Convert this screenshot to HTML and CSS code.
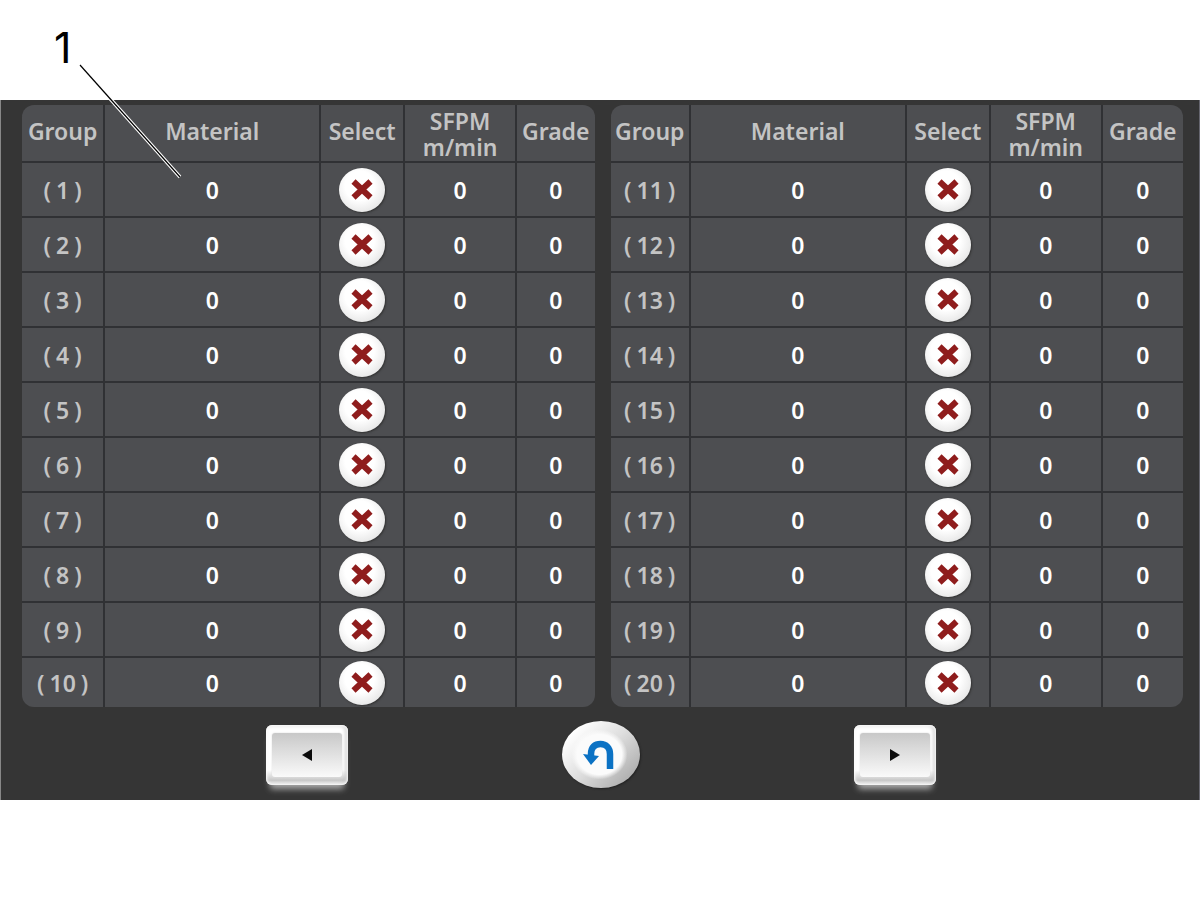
FILE: index.html
```html
<!DOCTYPE html>
<html lang="en">
<head>
    <meta charset="UTF-8">
    <meta name="viewport" content="width=device-width, initial-scale=1.0">
    <title>Material Groups</title>
    <link rel="stylesheet" href="styles.css">
</head>
<body>
    <div class="figure">
        <div class="callout">1</div>
        <svg class="leader" width="110" height="120" viewBox="0 0 110 120" aria-hidden="true">
            <path d="M4 6L104 118" stroke="#fff" stroke-width="3.4"/>
            <path d="M4 6L104 118" stroke="#000" stroke-width="1.2"/>
        </svg>

        <main class="screen">
            <div class="tables">
                <table>
                    <colgroup>
                        <col class="group"><col class="material"><col class="select"><col class="speed"><col class="grade">
                    </colgroup>
                    <thead>
                        <tr><th>Group</th><th>Material</th><th>Select</th><th class="two-line">SFPM<br>m/min</th><th>Grade</th></tr>
                    </thead>
                    <tbody id="left"></tbody>
                </table>
                <table>
                    <colgroup>
                        <col class="group"><col class="material"><col class="select"><col class="speed"><col class="grade">
                    </colgroup>
                    <thead>
                        <tr><th>Group</th><th>Material</th><th>Select</th><th class="two-line">SFPM<br>m/min</th><th>Grade</th></tr>
                    </thead>
                    <tbody id="right"></tbody>
                </table>
            </div>

            <div class="nav">
                <button class="key" aria-label="Previous page">
                    <span class="cap">
                        <svg width="12" height="12" viewBox="0 0 12 12"><path d="M1 6L11 0V12Z" fill="#0c0c0c"/></svg>
                    </span>
                </button>
                <button class="back" aria-label="Return">
                    <svg width="32" height="30" viewBox="0 0 32 30">
                        <path d="M8 16V14C8 7 12 4 17.500 4C23 4 27 8 27 14V29" fill="none" stroke="#0b72c4" stroke-width="6.500"/>
                        <path d="M0 14L16 16L8 25Z" fill="#0b72c4"/>
                    </svg>
                </button>
                <button class="key" aria-label="Next page">
                    <span class="cap">
                        <svg width="12" height="12" viewBox="0 0 12 12"><path d="M11 6L1 0V12Z" fill="#0c0c0c"/></svg>
                    </span>
                </button>
            </div>
        </main>
    </div>

    <script>
        // Fill one table with the rows first..last
        function fillRows(id, first, last) {
            let html = "";
            for (let n = first; n <= last; n++) {
                html += `<tr>
                    <td class="label">(<span class="num">${n}</span>)</td>
                    <td>0</td>
                    <td><button class="cross" aria-label="Select group ${n}">
                        <svg width="24" height="24" viewBox="0 0 24 24">
                            <path d="M3.5 3.5L20.5 19.5M20.5 3.5L3.5 19.5" stroke="#8f1d1d" stroke-width="6"/>
                        </svg>
                    </button></td>
                    <td>0</td>
                    <td>0</td>
                </tr>`;
            }
            document.getElementById(id).innerHTML = html;
        }

        fillRows("left", 1, 10);
        fillRows("right", 11, 20);
    </script>
</body>
</html>
```
FILE: styles.css
```css
* {
    box-sizing: border-box;
}
body {
    margin: 0;
    background: #fff;
    font-family: "Noto Sans", sans-serif;
}
.figure {
    position: relative;
}
.callout {
    height: 100px;
    padding: 22px 0 0 54px;
    font: 43px/50px Inter, sans-serif;
    color: #000;
}
.leader {
    position: absolute;
    left: 76px;
    top: 59px;
    pointer-events: none;
}
.screen {
    background: #353535;
    border-left: 1px solid #888;
    border-right: 1px solid #66666f;
    padding: 5px 16px 12px 21px;
}
.tables {
    display: grid;
    grid-template-columns: 1fr 1fr;
    gap: 16px;
}
table {
    width: 100%;
    table-layout: fixed;
    border-collapse: separate;
    border-spacing: 0;
    background: #4d4e51;
    border-radius: 12px;
    overflow: hidden;
}
.group {
    width: 14.2%;
}
.material {
    width: 37.7%;
}
.select {
    width: 14.7%;
}
.speed {
    width: 19.5%;
}
.grade {
    width: 13.9%;
}
table + table .group {
    width: 13.7%;
}
table + table .grade {
    width: 14.4%;
}
th, td {
    padding: 0;
    text-align: center;
    vertical-align: middle;
}
th + th, td + td {
    border-left: 2px solid #303134;
}
th {
    height: 56px;
    padding-bottom: 4px;
    font-size: 23px;
    font-weight: 600;
    line-height: 26px;
    color: #c4c4c4;
}
th.two-line {
    padding: 2px 0 0;
}
td {
    height: 55px;
    border-top: 2px solid #303134;
    font-size: 23px;
    font-weight: 600;
    line-height: 26px;
    color: #fff;
}
td.label {
    color: #c4c4c4;
}
.num {
    padding: 0 5px;
}
tr:last-child td {
    height: 51px;
}
button {
    border: none;
    padding: 0;
    cursor: pointer;
}
.cross {
    display: flex;
    align-items: center;
    justify-content: center;
    width: 46px;
    height: 44px;
    margin: 0 auto;
    border-radius: 50%;
    background: radial-gradient(circle at 45% 40%, #fff 40%, #e4e4e4 80%);
    box-shadow: 1px 1px 2px #333;
}
.nav {
    display: grid;
    grid-template-columns: 1fr 1fr 1fr;
    justify-items: center;
    align-items: center;
    padding: 14px 141px 0 138px;
}
.key {
    display: flex;
    width: 82px;
    height: 60px;
    padding: 8px 6px 8px;
    border-radius: 6px;
    background: linear-gradient(#fff 75%, #c8c8c8 92%, #f4f4f4);
    box-shadow: inset 0 0 3px 1px #fff, inset -2px 0 4px #bbb, 0 8px 6px -4px #aaa;
}
.cap {
    flex: 1;
    display: flex;
    align-items: center;
    justify-content: center;
    border-radius: 3px;
    background: linear-gradient(#c8c8c8, #dadada 35%, #fafafa);
    box-shadow: 0 0 2px #ddd;
}
.back {
    display: flex;
    align-items: center;
    justify-content: center;
    width: 78px;
    height: 67px;
    padding-right: 4px;
    border-radius: 50%;
    background: radial-gradient(ellipse 28px 25px at 48% 50%, #fbfbfb 80%, transparent 100%), linear-gradient(135deg, #fff 15%, #dedede 50%, #ababab 90%);
    box-shadow: 1px 1px 2px #222;
}
```
